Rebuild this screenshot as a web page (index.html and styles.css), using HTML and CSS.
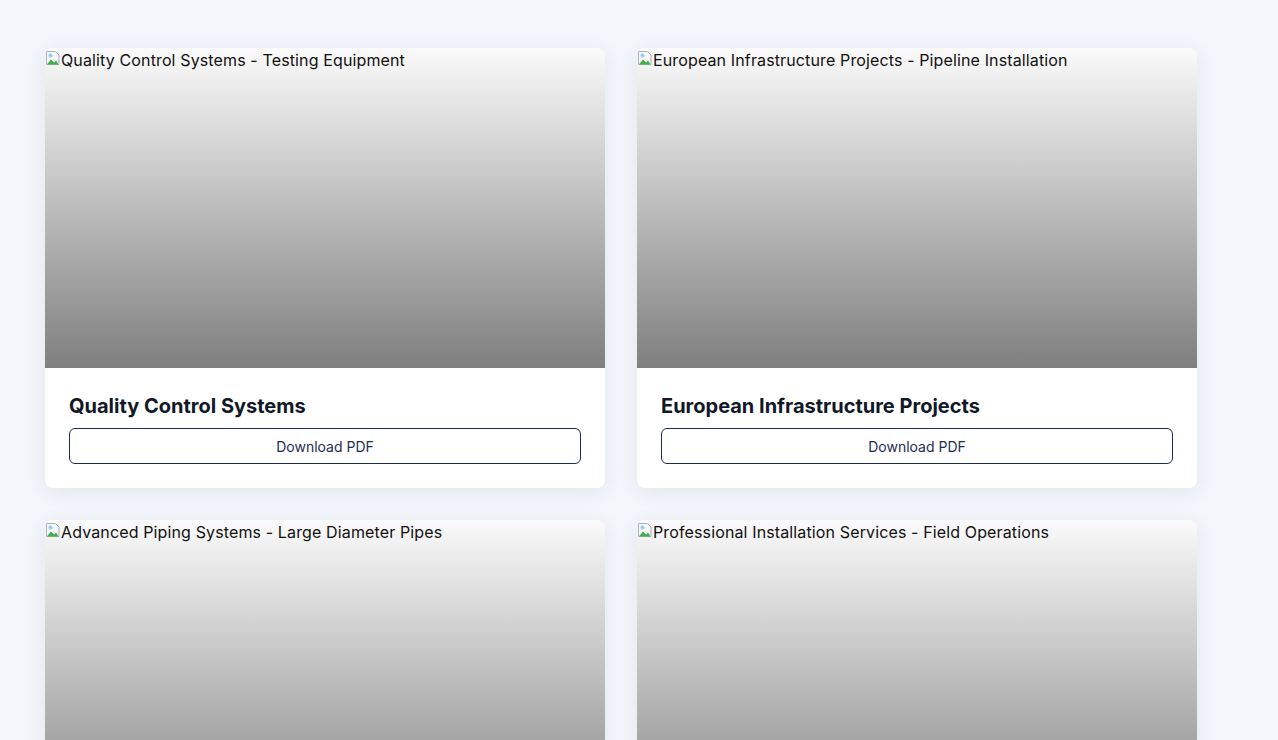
FILE: index.html
```html
<!DOCTYPE html>
<html lang="en">
<head>
<meta charset="utf-8">
<title>Gallery</title>
<link rel="stylesheet" href="styles.css">
</head>
<body>
<main class="grid">
  <article class="card">
    <div class="media"><svg class="broken" width="16" height="16" viewBox="0 0 16 16"><path d="M1.5 1.5h9l3.5 3.5v9.5h-12.5z" fill="#f4f6f8" stroke="#a7afb8"/><path d="M2 14.5l4-5 3 3 2-2 2.5 4z" fill="#3fae49"/><circle cx="5.5" cy="5.5" r="2" fill="#9cc9ec"/></svg><span class="alt">Quality Control Systems - Testing Equipment</span></div>
    <div class="body">
      <h2 class="title">Quality Control Systems</h2>
      <button class="btn">Download PDF</button>
    </div>
  </article>
  <article class="card">
    <div class="media"><svg class="broken" width="16" height="16" viewBox="0 0 16 16"><path d="M1.5 1.5h9l3.5 3.5v9.5h-12.5z" fill="#f4f6f8" stroke="#a7afb8"/><path d="M2 14.5l4-5 3 3 2-2 2.5 4z" fill="#3fae49"/><circle cx="5.5" cy="5.5" r="2" fill="#9cc9ec"/></svg><span class="alt">European Infrastructure Projects - Pipeline Installation</span></div>
    <div class="body">
      <h2 class="title">European Infrastructure Projects</h2>
      <button class="btn">Download PDF</button>
    </div>
  </article>
  <article class="card">
    <div class="media"><svg class="broken" width="16" height="16" viewBox="0 0 16 16"><path d="M1.5 1.5h9l3.5 3.5v9.5h-12.5z" fill="#f4f6f8" stroke="#a7afb8"/><path d="M2 14.5l4-5 3 3 2-2 2.5 4z" fill="#3fae49"/><circle cx="5.5" cy="5.5" r="2" fill="#9cc9ec"/></svg><span class="alt">Advanced Piping Systems - Large Diameter Pipes</span></div>
    <div class="body">
      <h2 class="title">Advanced Piping Systems</h2>
      <button class="btn">Download PDF</button>
    </div>
  </article>
  <article class="card">
    <div class="media"><svg class="broken" width="16" height="16" viewBox="0 0 16 16"><path d="M1.5 1.5h9l3.5 3.5v9.5h-12.5z" fill="#f4f6f8" stroke="#a7afb8"/><path d="M2 14.5l4-5 3 3 2-2 2.5 4z" fill="#3fae49"/><circle cx="5.5" cy="5.5" r="2" fill="#9cc9ec"/></svg><span class="alt">Professional Installation Services - Field Operations</span></div>
    <div class="body">
      <h2 class="title">Professional Installation Services</h2>
      <button class="btn">Download PDF</button>
    </div>
  </article>
</main>
</body>
</html>
```
FILE: styles.css
```css
* { box-sizing: border-box; }
html, body { margin: 0; }
body {
  background: #f3f7fc;
  font-family: Inter, "Noto Sans", sans-serif;
  color: #0f172a;
}
.grid {
  display: grid;
  grid-template-columns: 560px 560px;
  gap: 32px;
  padding: 48px 45px;
}
.card {
  background: #fff;
  border-radius: 8px;
  overflow: hidden;
  box-shadow: 0 4px 20px rgba(15, 30, 60, 0.08);
}
.media {
  height: 320px;
  background: linear-gradient(to bottom, #fafafa, #7f7f7f);
  display: flex;
  align-items: flex-start;
  font-size: 16px;
  line-height: 24px;
  color: #111;
}
.broken { flex: none; margin-top: 2px; }
.alt { letter-spacing: 0.13px; }
.body { padding: 24px; }
.title {
  margin: 0 0 8px;
  font-size: 20px;
  line-height: 28px;
  font-weight: 700;
  color: #111827;
}
.btn {
  display: block;
  width: 100%;
  height: 36px;
  background: #fff;
  border: 1px solid #1e2d4f;
  border-radius: 6px;
  font-family: Inter, sans-serif;
  font-size: 14px;
  color: #1e2d4f;
  cursor: pointer;
}
```
